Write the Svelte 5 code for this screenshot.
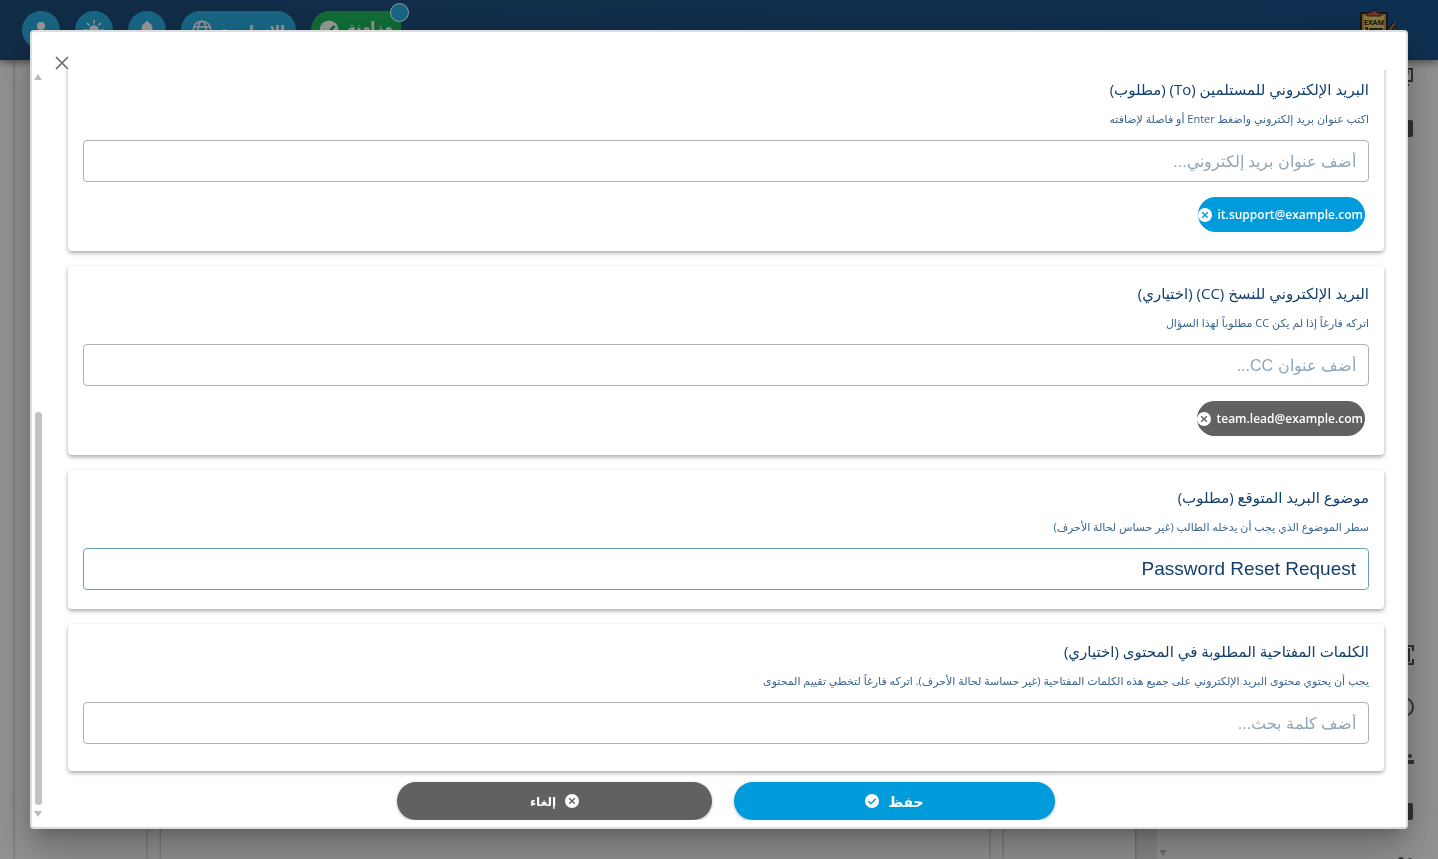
<script lang="ts">
	type Field = {
		id: string;
		title: string;
		hint: string;
		placeholder: string;
		value: string;
		chip?: string;
		tone?: string;
		roomy?: boolean;
	};

	let fields = $state<Field[]>([
		{
			id: 'to',
			title: 'البريد الإلكتروني للمستلمين (To) (مطلوب)',
			hint: 'اكتب عنوان بريد إلكتروني واضغط Enter أو فاصلة لإضافته',
			placeholder: 'أضف عنوان بريد إلكتروني...',
			value: '',
			chip: 'it.support@example.com',
			tone: 'blue'
		},
		{
			id: 'cc',
			title: 'البريد الإلكتروني للنسخ (CC) (اختياري)',
			hint: 'اتركه فارغاً إذا لم يكن CC مطلوباً لهذا السؤال',
			placeholder: 'أضف عنوان CC...',
			value: '',
			chip: 'team.lead@example.com',
			tone: 'gray'
		},
		{
			id: 'subject',
			title: 'موضوع البريد المتوقع (مطلوب)',
			hint: 'سطر الموضوع الذي يجب أن يدخله الطالب (غير حساس لحالة الأحرف)',
			placeholder: '',
			value: 'Password Reset Request'
		},
		{
			id: 'keywords',
			title: 'الكلمات المفتاحية المطلوبة في المحتوى (اختياري)',
			hint: 'يجب أن يحتوي محتوى البريد الإلكتروني على جميع هذه الكلمات المفتاحية (غير حساسة لحالة الأحرف). اتركه فارغاً لتخطي تقييم المحتوى',
			placeholder: 'أضف كلمة بحث...',
			value: '',
			roomy: true
		}
	]);

	const menu = ['screen', 'box', '', '', '', '', '', '', '', '', '', 'scan', 'clock', 'group', 'box', 'group'];
</script>

{#snippet crossIcon()}
	<svg class="mark" viewBox="0 0 14 14" aria-hidden="true">
		<circle cx="7" cy="7" r="7" fill="#fff" />
		<path d="M4.2 4.2l5.6 5.6M9.8 4.2l-5.6 5.6" stroke="currentColor" stroke-width="1.4" />
	</svg>
{/snippet}

{#snippet checkIcon()}
	<svg class="mark" viewBox="0 0 14 14" aria-hidden="true">
		<circle cx="7" cy="7" r="7" fill="#fff" />
		<path d="M3.4 7.2l2.5 2.5 4.8-4.9" fill="none" stroke="currentColor" stroke-width="1.5" />
	</svg>
{/snippet}

<div class="page" dir="rtl" inert>
	<header class="topbar">
		<svg class="logo" viewBox="0 0 36 40" aria-hidden="true">
			<rect x="1" y="3" width="26" height="36" rx="1" fill="#c9963f" stroke="#20242e" stroke-width="2" />
			<rect x="4" y="6" width="20" height="30" fill="#e8cf62" />
			<path d="M7 6V3h4V1h6v2h4v3z" fill="#c0604c" stroke="#4a2b2b" />
			<text x="14" y="15" text-anchor="middle" font-size="7" font-weight="700" fill="#222">EXAM</text>
			<path d="M5 18h2v3M9 19h14M9 22h14" stroke="#5a2f2f" stroke-width="2" fill="none" />
			<path d="M35 13l-9 12" stroke="#20242e" stroke-width="4" />
			<path d="M35 13l-9 12" stroke="#c07a3c" stroke-width="2" />
		</svg>
		<div class="tools">
			<button class="pill sync">
				<span class="sync-text">مزامنة</span>
				<svg viewBox="0 0 20 20" aria-hidden="true"><circle cx="10" cy="10" r="9.5" fill="#fff" /><path d="M4.5 10.5l3.5 3.5 7.5-8" fill="none" stroke="#159a4b" stroke-width="2.4" /></svg>
				<span class="dot"></span>
			</button>
			<button class="pill lang">الإنجليزية
				<svg viewBox="0 0 20 20" fill="none" stroke="#fff" stroke-width="1.6" aria-hidden="true"><circle cx="10" cy="10" r="8.8" /><ellipse cx="10" cy="10" rx="4" ry="8.8" /><path d="M2 7h16M2 13h16" /></svg>
			</button>
			<button class="round" aria-label="الإشعارات">
				<svg viewBox="0 0 20 20" fill="#fff" aria-hidden="true"><path d="M10 1c1 0 1.6.8 1.6 1.7C14 3.5 15.4 5.5 15.4 8v5l1.6 2H3l1.6-2V8c0-2.5 1.4-4.5 3.8-5.3C8.4 1.8 9 1 10 1zM8 16h4a2 2 0 01-4 0z" /></svg>
			</button>
			<button class="round" aria-label="المظهر">
				<svg viewBox="0 0 20 20" fill="#fff" stroke="#fff" stroke-width="1.6" aria-hidden="true"><circle cx="10" cy="10" r="4" /><path d="M10 0v3.5M10 16.5V20M0 10h3.5M16.5 10H20M3 3l2.4 2.4M14.6 14.6L17 17M3 17l2.4-2.4M14.6 5.4L17 3" /></svg>
			</button>
			<button class="round" aria-label="الحساب">
				<svg viewBox="0 0 20 20" fill="#fff" aria-hidden="true"><circle cx="10" cy="6" r="4" /><path d="M2 18c0-4 3.5-6.5 8-6.5s8 2.5 8 6.5z" /></svg>
			</button>
		</div>
	</header>
	<div class="workspace">
		<nav class="sidebar">
			<ul>
				{#each menu as icon}
					<li class:spaced={icon === 'scan'}>
						<svg viewBox="0 0 24 20" fill="none" stroke="#555" stroke-width="2" aria-hidden="true">
							{#if icon === 'screen'}
								<path d="M1 3h21v12H1zM6 19h13M14 6h4l-2 5" />
							{:else if icon === 'scan'}
								<path d="M2 6V1h5M17 1h6v5M2 14v5h5M17 19h6v-5" /><rect x="4" y="4" width="15" height="12" fill="#555" />
							{:else if icon === 'clock'}
								<circle cx="14" cy="10" r="9" /><path d="M14 4v7" />
							{:else if icon === 'group'}
								<g fill="#555" stroke="none"><circle cx="11" cy="7" r="3" /><circle cx="20" cy="7" r="2" /><path d="M5 15v-4h10v4zM17 15v-4h7v4z" /></g>
							{:else if icon === 'box'}
								<rect x="2" y="3" width="20" height="15" rx="1" fill="#555" />
							{/if}
						</svg>
					</li>
				{/each}
			</ul>
			<span class="arrow down sidebar-arrow"></span>
		</nav>
		<div class="gutter"></div>
		<section class="panel narrow"></section>
		<section class="panel"></section>
		<section class="panel narrow"></section>
	</div>
</div>

<div class="overlay" dir="rtl">
	<div class="dialog" role="dialog" aria-modal="true" aria-label="إعدادات البريد">
		<div class="dialog-head">
			<button class="close" aria-label="إغلاق">
				<svg viewBox="0 0 14 14" aria-hidden="true"><path d="M1 1l12 12M13 1L1 13" stroke="#666" stroke-width="1.6" /></svg>
			</button>
		</div>
		<div class="dialog-body">
			<form class="fields" onsubmit={(e) => e.preventDefault()}>
				{#each fields as field (field.id)}
					<section class="card" class:card--roomy={field.roomy}>
						<label class="title" for={field.id}>{field.title}</label>
						<p class="hint" id="{field.id}-hint">{field.hint}</p>
						<input
							class="box"
							class:box--filled={field.value}
							type="text"
							id={field.id}
							aria-describedby="{field.id}-hint"
							placeholder={field.placeholder}
							bind:value={field.value}
						/>
						{#if field.chip}
							<button type="button" class="chip {field.tone}">
								<span dir="ltr">{field.chip}</span>
								{@render crossIcon()}
							</button>
						{/if}
					</section>
				{/each}
				<div class="actions">
					<button type="submit" class="action save blue">حفظ {@render checkIcon()}</button>
					<button type="button" class="action cancel gray">{@render crossIcon()} إلغاء</button>
				</div>
			</form>
			<div class="scrollbar" aria-hidden="true">
				<span class="arrow up"></span>
				<span class="space"></span>
				<span class="thumb"></span>
				<span class="arrow down"></span>
			</div>
		</div>
	</div>
</div>

<style>
	:global(body) {
		margin: 0;
		overflow: hidden;
		font-family: 'Open Sans', 'DejaVu Sans', sans-serif;
	}
	.page {
		display: flex;
		flex-direction: column;
		height: 100vh;
		overflow: hidden;
		background: #f4f4f4;
	}
	button {
		font-family: inherit;
		border: 0;
		padding: 0;
		color: #fff;
		cursor: pointer;
	}
	.topbar {
		position: relative;
		display: flex;
		flex: none;
		justify-content: space-between;
		align-items: center;
		height: 60px;
		padding: 0 42px 0 22px;
		box-sizing: border-box;
		background: linear-gradient(to left, #175087, #1e4a76);
		box-shadow: 0 2px 8px rgba(0, 0, 0, 0.5);
		z-index: 1;
	}
	.logo {
		width: 36px;
		height: 40px;
	}
	.tools {
		display: flex;
		gap: 15px;
	}
	.round,
	.pill {
		display: flex;
		align-items: center;
		justify-content: center;
		height: 38px;
		background: #28acdf;
		font-size: 14px;
		font-weight: 700;
	}
	.round {
		width: 38px;
		border-radius: 50%;
	}
	.pill {
		position: relative;
		gap: 8px;
		border-radius: 19px;
	}
	.pill svg,
	.round svg {
		width: 20px;
		height: 20px;
	}
	.sync {
		width: 90px;
		background: #1cb55c;
		border-radius: 19px 4px 4px 19px;
	}
	.sync-text {
		padding-bottom: 8px;
	}
	.lang {
		width: 115px;
	}
	.dot {
		position: absolute;
		top: -8px;
		right: -8px;
		width: 17px;
		height: 17px;
		border: 1px solid #fff;
		border-radius: 50%;
		background: #28acdf;
	}
	.workspace {
		display: flex;
		flex: 1;
		padding-left: 15px;
		min-height: 0;
	}
	.sidebar {
		display: flex;
		justify-content: space-between;
		width: 281px;
		flex: none;
		overflow: hidden;
	}
	.sidebar ul {
		display: flex;
		flex-direction: column;
		gap: 32px;
		margin: 0;
		padding: 6px 24px 0 0;
		list-style: none;
	}
	.sidebar li {
		height: 20px;
	}
	.sidebar .spaced {
		margin-top: 7px;
	}
	.sidebar svg {
		width: 24px;
		height: 20px;
	}
	.sidebar-arrow {
		align-self: flex-end;
		margin: 0 0 3px 2px;
	}
	.gutter {
		width: 22px;
		flex: none;
		background: #e2e2e2;
	}
	.panel {
		flex: 1;
		margin-left: 15px;
		box-shadow: 0 0 3px rgba(0, 0, 0, 0.4);
	}
	.panel:last-child {
		margin-left: 0;
	}
	.narrow {
		flex: 0 0 131px;
	}
	.overlay {
		position: fixed;
		inset: 0;
		z-index: 2;
		display: flex;
		padding: 30px;
		background: rgba(0, 0, 0, 0.4);
	}
	.dialog {
		display: flex;
		flex: 1;
		flex-direction: column;
		min-width: 0;
		border: 2px solid #ddd;
		border-radius: 4px;
		background: #fff;
		box-shadow:
			0 11px 15px -7px rgba(0, 0, 0, 0.2),
			0 24px 38px 3px rgba(0, 0, 0, 0.14),
			0 9px 46px 8px rgba(0, 0, 0, 0.12);
	}
	.dialog-head {
		display: flex;
		flex: none;
		justify-content: flex-end;
		align-items: flex-end;
		height: 38px;
		padding-left: 23px;
	}
	.close {
		display: flex;
		width: 14px;
		height: 14px;
		background: none;
	}
	.dialog-body {
		display: flex;
		flex: 1;
		min-height: 0;
		padding-bottom: 7px;
	}
	/* scrolled to the end, so the first card is cut at the top */
	.fields {
		display: flex;
		flex: 1;
		flex-direction: column;
		justify-content: flex-end;
		gap: 15px;
		min-width: 0;
		padding: 0 22px 0 24px;
		overflow: hidden;
	}
	.card {
		display: flex;
		flex: none;
		flex-direction: column;
		padding: 14px 15px 19px;
		border-radius: 4px;
		background: #fff;
		box-shadow: 0 2px 4px rgba(0, 0, 0, 0.35);
	}
	.card--roomy {
		padding-bottom: 27px;
	}
	.title {
		margin-bottom: 7px;
		color: #123f6d;
		font-size: 15px;
		line-height: 26px;
	}
	.hint {
		margin: 0 0 11px;
		color: #3b6690;
		font-size: 11px;
		line-height: 20px;
		white-space: nowrap;
	}
	.box {
		height: 42px;
		box-sizing: border-box;
		padding: 0 12px;
		border: 1px solid #b0b0b0;
		border-radius: 4px;
		background: #fff;
		color: #123f6d;
		font-family: 'Liberation Sans', Arial, sans-serif;
		font-size: 19px;
	}
	.box--filled {
		border-color: #66a3b8;
	}
	.box::placeholder {
		color: #8fa6b8;
		font-size: 16px;
		opacity: 1;
	}
	.chip {
		display: flex;
		align-items: center;
		align-self: flex-start;
		gap: 6px;
		height: 35px;
		margin: 15px 4px 0;
		padding-right: 2px;
		border-radius: 18px;
		font-size: 12px;
		font-weight: 600;
	}
	.blue {
		background: #009bdb;
	}
	.gray {
		background: #616161;
	}
	.mark {
		width: 14px;
		height: 14px;
		flex: none;
	}
	.blue .mark {
		color: #009bdb;
	}
	.gray .mark {
		color: #616161;
	}
	.actions {
		display: flex;
		flex: none;
		justify-content: center;
		gap: 22px;
		margin-top: -4px;
		padding: 0 25%;
	}
	.action {
		display: flex;
		align-items: center;
		justify-content: center;
		gap: 9px;
		height: 38px;
		border-radius: 19px;
		font-weight: 700;
		box-shadow: 0 1px 3px rgba(0, 0, 0, 0.3);
	}
	.save {
		flex: 321;
		font-size: 14px;
	}
	.cancel {
		flex: 315;
		font-size: 12px;
	}
	.scrollbar {
		display: flex;
		flex: none;
		flex-direction: column;
		align-items: center;
		width: 12px;
		padding: 4px 0 3px;
		box-sizing: border-box;
	}
	.arrow {
		border: 4px solid transparent;
	}
	.up {
		border-top: 0;
		border-bottom: 6px solid #bbb;
		margin-bottom: 5px;
	}
	.down {
		border-bottom: 0;
		border-top: 6px solid #bbb;
		margin-top: 6px;
	}
	.space {
		flex: 327;
	}
	.thumb {
		flex: 394;
		width: 7px;
		border-radius: 4px;
		background: #c2c2c2;
	}
</style>
